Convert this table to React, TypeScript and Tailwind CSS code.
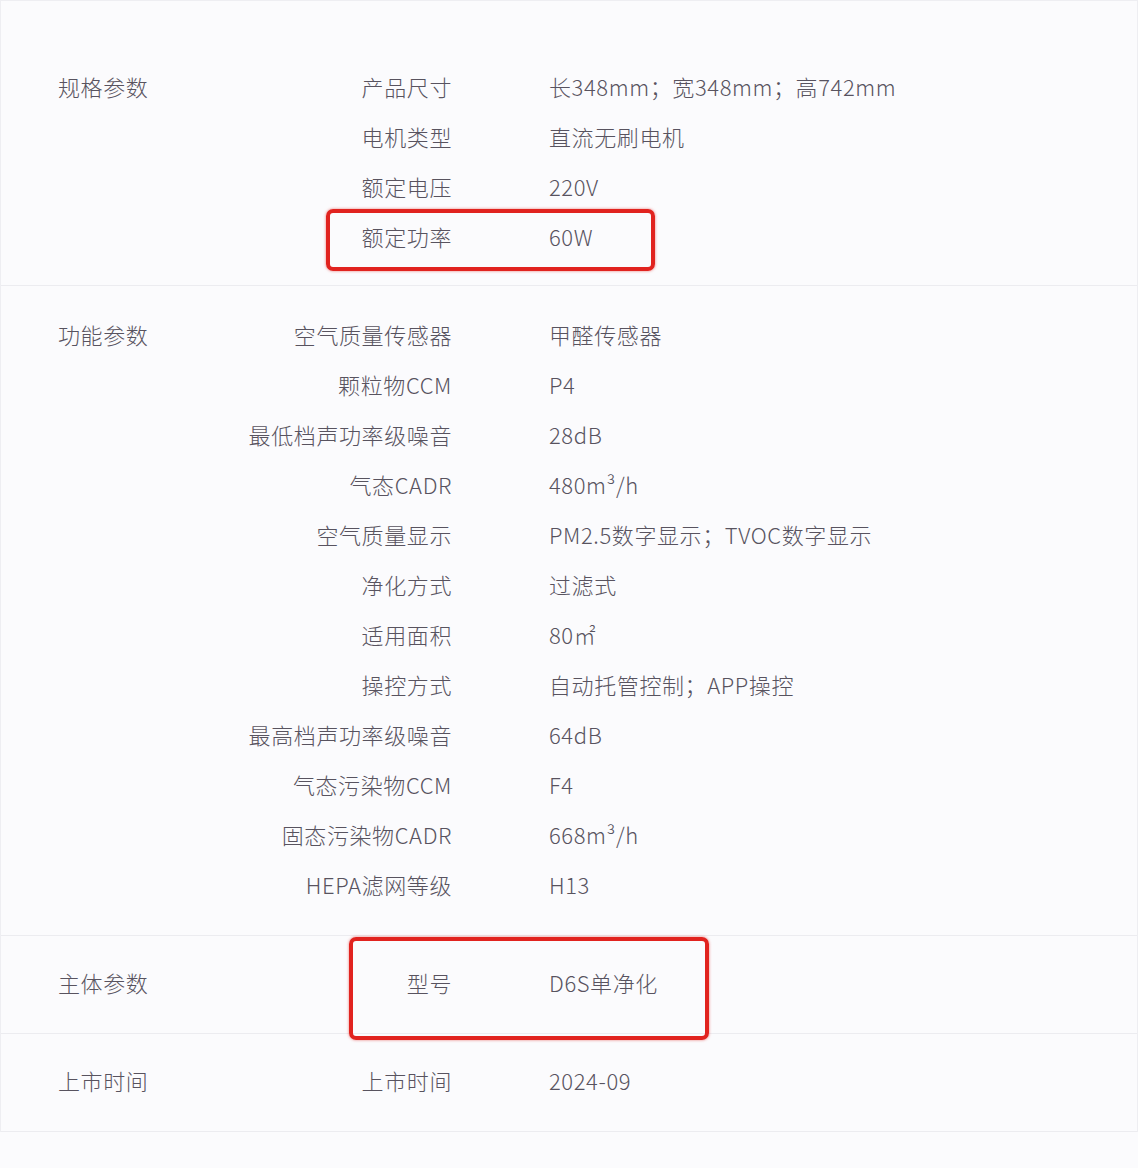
import React from "react";

type Section = { title: string; rows: [string, string][]; pt: string; pb: string };

const SECTIONS: Section[] = [
  {
    title: "规格参数",
    pt: "pt-[60px]",
    pb: "pb-[24px]",
    rows: [
      ["产品尺寸", "长348mm；宽348mm；高742mm"],
      ["电机类型", "直流无刷电机"],
      ["额定电压", "220V"],
      ["额定功率", "60W"],
    ],
  },
  {
    title: "功能参数",
    pt: "pt-[23px]",
    pb: "pb-[26px]",
    rows: [
      ["空气质量传感器", "甲醛传感器"],
      ["颗粒物CCM", "P4"],
      ["最低档声功率级噪音", "28dB"],
      ["气态CADR", "480m³/h"],
      ["空气质量显示", "PM2.5数字显示；TVOC数字显示"],
      ["净化方式", "过滤式"],
      ["适用面积", "80㎡"],
      ["操控方式", "自动托管控制；APP操控"],
      ["最高档声功率级噪音", "64dB"],
      ["气态污染物CCM", "F4"],
      ["固态污染物CADR", "668m³/h"],
      ["HEPA滤网等级", "H13"],
    ],
  },
  {
    title: "主体参数",
    pt: "pt-[21px]",
    pb: "pb-[26px]",
    rows: [["型号", "D6S单净化"]],
  },
  {
    title: "上市时间",
    pt: "pt-[21px]",
    pb: "pb-[26px]",
    rows: [["上市时间", "2024-09"]],
  },
];

export default function App() {
  return (
    <div
      className="relative w-[1138px] h-[1168px] overflow-hidden bg-[#fbfbfd] text-[#58535f] text-[22px] font-light tracking-[0.6px]"
      style={{ fontFamily: '"Noto Sans CJK SC", "Noto Sans", sans-serif' }}
    >
      <div className="border-t border-[#eeeef2] border-x">
        {SECTIONS.map((s) => (
          <div key={s.title} className={`flex border-b border-[#ececf0] ${s.pt} ${s.pb}`}>
            <div className="w-[247px] pl-[57px] h-[50px] flex items-center">{s.title}</div>
            <div className="flex flex-col">
              {s.rows.map(([label, value]) => (
                <div key={label} className="flex items-center h-[50px]">
                  <div className="w-[204px] text-right whitespace-nowrap">{label}</div>
                  <div className="ml-[97px] whitespace-nowrap">{value}</div>
                </div>
              ))}
            </div>
          </div>
        ))}
      </div>

      {/* highlight boxes */}
      <div className="absolute left-[326px] top-[209px] w-[329px] h-[62px] rounded-[7px] border-[4px] border-[#e1231f] shadow-[0_0_3px_rgba(225,35,31,0.6)]" />
      <div className="absolute left-[349px] top-[937px] w-[360px] h-[103px] rounded-[7px] border-[4px] border-[#e1231f] shadow-[0_0_3px_rgba(225,35,31,0.6)]" />
    </div>
  );
}
